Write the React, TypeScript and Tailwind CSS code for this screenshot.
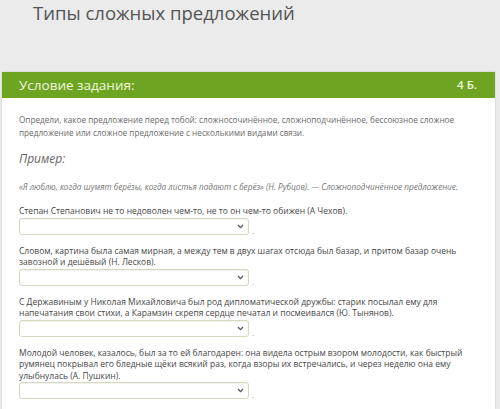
import React from "react";

function Chevron() {
  return (
    <svg width="7" height="5" viewBox="0 0 7 5" className="shrink-0">
      <path d="M1 1 L3.5 3.6 L6 1" fill="none" stroke="#555" strokeWidth="1.3" />
    </svg>
  );
}

function Select() {
  return (
    <div className="flex items-end gap-[3px] mt-[1px]">
      <div className="w-[230px] h-[17px] rounded-[3px] border border-[#d6d8c0] bg-white flex items-center justify-end pr-[4px] shadow-[inset_0_1px_1px_rgba(0,0,0,0.06)]">
        <Chevron />
      </div>
      <span className="text-[8px] leading-[9px] text-[#888]">.</span>
    </div>
  );
}

function Item({ text }: { text: string }) {
  return (
    <div className="flex flex-col">
      <p className="text-[8.5px] leading-[11.5px] text-[#474747]">{text}</p>
      <Select />
    </div>
  );
}

export default function App() {
  return (
    <div
      className="w-[500px] h-[409px] bg-[#ebebeb] overflow-hidden flex flex-col"
      style={{ fontFamily: '"Open Sans", "Noto Sans", sans-serif' }}
    >
      <div className="h-[72px] shrink-0 pl-[33px]">
        <h1 className="text-[18.5px] leading-[25px] text-[#555] font-normal">Типы сложных предложений</h1>
      </div>
      <div className="ml-[2px] mr-[5px] flex-1 min-h-0 flex flex-col bg-white shadow-[0_0_2px_rgba(0,0,0,0.15)]">
        <div className="h-[26px] shrink-0 bg-[#6da522] flex items-center justify-between pl-[17px] pr-[18px]">
          <span className="text-[13.5px] text-[#f1f7dc]">Условие задания:</span>
          <span className="text-[11.5px] font-semibold text-[#eef5d8]">4 Б.</span>
        </div>
        <div className="pl-[17px] pr-[19px] pt-[15px] flex flex-col">
          <p className="text-[8.2px] leading-[13px] text-[#6a6a6a]">
            Определи, какое предложение перед тобой: сложносочинённое, сложноподчинённое, бессоюзное сложное предложение или сложное предложение с несколькими видами связи.
          </p>
          <p className="mt-[12px] text-[12px] italic text-[#666] leading-[16px]">Пример:</p>
          <p className="mt-[14px] text-[8.2px] italic leading-[12px] text-[#777] whitespace-nowrap">
            «Я люблю, когда шумят берёзы, когда листья падают с берёз» (Н. Рубцов). — Сложноподчинённое предложение.
          </p>
          <div className="mt-[12px] flex flex-col gap-[10px]">
            <Item text="Степан Степанович не то недоволен чем-то, не то он чем-то обижен (А Чехов)." />
            <Item text="Словом, картина была самая мирная, а между тем в двух шагах отсюда был базар, и притом базар очень завозной и дешёвый (Н. Лесков)." />
            <Item text="С Державиным у Николая Михайловича был род дипломатической дружбы: старик посылал ему для напечатания свои стихи, а Карамзин скрепя сердце печатал и посмеивался (Ю. Тынянов)." />
            <Item text="Молодой человек, казалось, был за то ей благодарен: она видела острым взором молодости, как быстрый румянец покрывал его бледные щёки всякий раз, когда взоры их встречались, и через неделю она ему улыбнулась (А. Пушкин)." />
          </div>
        </div>
      </div>
    </div>
  );
}
